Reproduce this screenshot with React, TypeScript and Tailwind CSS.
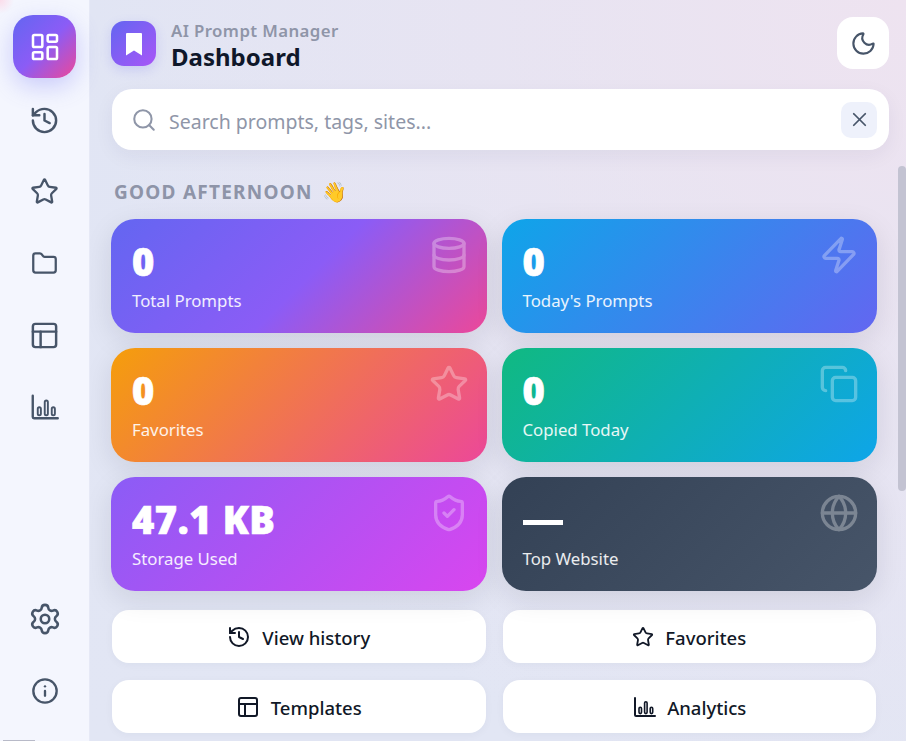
import { LayoutDashboard, History, Star, Folder, PanelsTopLeft, Settings, Info, Moon, X, Search, Database, Zap, Copy, ShieldCheck, Globe } from "lucide-react";
import type { ComponentType, ReactNode } from "react";

type IconT = ComponentType<{ className?: string; strokeWidth?: number }>;

function BarsIcon({ className, strokeWidth = 2 }: { className?: string; strokeWidth?: number }) {
  return (
    <svg viewBox="0 0 24 24" className={className} fill="none" stroke="currentColor" strokeLinecap="round" strokeLinejoin="round">
      <path d="M3 3v17a1 1 0 0 0 1 1h19" strokeWidth={strokeWidth} />
      <rect x="7" y="12.200" width="2.500" height="6.400" rx="1.250" strokeWidth={strokeWidth * 0.8} />
      <rect x="12.600" y="6.800" width="2.500" height="11.800" rx="1.250" strokeWidth={strokeWidth * 0.8} />
      <rect x="18.200" y="12.200" width="2.500" height="6.400" rx="1.250" strokeWidth={strokeWidth * 0.8} />
    </svg>
  );
}

function RailButton({ icon: Icon, active, iconClass, stroke = 1.9 }: { icon: IconT; active?: boolean; iconClass: string; stroke?: number }) {
  return (
    <button
      className={
        active
          ? "flex h-[63px] w-[63px] items-center justify-center rounded-[20px] bg-[linear-gradient(135deg,#6366f1_0%,#8b5cf6_50%,#ec4899_100%)] text-white shadow-[0_8px_24px_rgba(99,102,241,0.3)]"
          : "flex h-[63px] w-[63px] items-center justify-center rounded-[20px] text-[#475569]"
      }
    >
      <Icon className={iconClass} strokeWidth={stroke} />
    </button>
  );
}

function StatCard({ value, label, icon: Icon, gradient, dash }: { value?: string; label: string; icon: IconT; gradient: string; dash?: boolean }) {
  return (
    <div className={"relative h-[114px] rounded-[24px] px-[21px] pt-[21px] text-white shadow-[0_8px_28px_rgba(15,23,42,0.1)] " + gradient}>
      {dash ? (
        <div className="flex h-[44px] items-center">
          <div className="mt-[4px] h-[5px] w-[40px] bg-white" />
        </div>
      ) : (
        <div className="h-[44px] text-[38px] font-black leading-[42px] tracking-[0.6px] [-webkit-text-stroke:0.7px_white]">{value}</div>
      )}
      <div className="mt-[5px] text-[16.800px] leading-[24px] text-white/90">{label}</div>
      <Icon className="absolute right-[18px] top-[16px] h-[40px] w-[40px] opacity-30" strokeWidth={2} />
    </div>
  );
}

function ActionButton({ icon: Icon, iconClass = "h-[24px] w-[24px]", children }: { icon: IconT; iconClass?: string; children: ReactNode }) {
  return (
    <button className="flex h-[53px] items-center justify-center gap-[11px] rounded-[17px] bg-white text-[18.500px] font-medium text-[#111827] shadow-[0_2px_8px_rgba(30,41,89,0.04)]">
      <Icon className={iconClass} strokeWidth={2} />
      <span className="mt-[2px]">{children}</span>
    </button>
  );
}

export default function App() {
  return (
    <div className="relative flex h-[741px] w-[906px] overflow-hidden bg-[radial-gradient(circle_at_100%_0%,#eee3f0_0%,rgba(238,227,240,0)_70%),linear-gradient(#e1e5f4,#e2e6f4)] font-['Noto_Sans','Open_Sans',sans-serif]">
      <aside className="relative flex h-full w-[90px] shrink-0 flex-col items-start border-r border-[#e6e9f6] bg-[radial-gradient(circle_at_0_0,#fbdcea_0,rgba(251,220,234,0)_14px),linear-gradient(#f4f6fe,#f4f6fe)] pb-[19px] pl-[13px] pt-[15px]">
        <div className="flex flex-col gap-[9px]">
          <RailButton icon={LayoutDashboard} active iconClass="h-[32px] w-[32px]" />
          <RailButton icon={History} iconClass="mt-[3px] h-[31px] w-[31px]" />
          <RailButton icon={Star} iconClass="mt-[2px] h-[29px] w-[29px]" />
          <RailButton icon={Folder} iconClass="mt-[2px] h-[27px] w-[27px]" stroke={2} />
          <RailButton icon={PanelsTopLeft} iconClass="mt-[1px] h-[31px] w-[31px]" />
          <RailButton icon={BarsIcon} iconClass="-ml-[2px] mt-[1px] h-[30px] w-[30px]" />
        </div>
        <div className="mt-auto flex flex-col gap-[9px]">
          <RailButton icon={Settings} iconClass="h-[34px] w-[34px]" stroke={1.8} />
          <RailButton icon={Info} iconClass="h-[28px] w-[28px]" stroke={2} />
        </div>
        <div className="absolute bottom-0 left-[3px] h-[1px] w-[32px] bg-[#b8bac8]" />
      </aside>

      <main className="relative flex h-full min-w-0 flex-1 flex-col">
        <header className="flex h-[89px] shrink-0 items-start justify-between pl-[21px] pr-[17px] pt-[17px]">
          <div className="flex items-start gap-[15px]">
            <div className="mt-[4px] flex h-[45px] w-[45px] items-center justify-center rounded-[13px] bg-[linear-gradient(135deg,#6366f1,#a855f7)] shadow-[0_4px_12px_rgba(99,102,241,0.2)]">
              <svg viewBox="0 0 24 24" className="h-[24px] w-[24px]" fill="white">
                <path d="M5 1h14a1 1 0 0 1 1 1v21.500l-8-5-8 5V2a1 1 0 0 1 1-1z" />
              </svg>
            </div>
            <div className="mt-[4px] flex flex-col">
              <span className="text-[16.800px] font-semibold leading-[20px] tracking-[0.4px] text-[#8f95a8]">AI Prompt Manager</span>
              <span className="text-[24px] font-bold leading-[32px] text-[#0f172a]">Dashboard</span>
            </div>
          </div>
          <button className="flex h-[52px] w-[52px] items-center justify-center rounded-[16px] bg-white text-[#475569]">
            <Moon className="h-[27px] w-[27px]" strokeWidth={1.9} />
          </button>
        </header>

        <div className="shrink-0 pl-[22px] pr-[17px]">
          <div className="flex h-[61px] items-center rounded-[20px] bg-white pl-[19px] pr-[12px] shadow-[0_6px_20px_rgba(30,41,89,0.06)]">
            <Search className="h-[26px] w-[26px] text-[#8f96a8]" strokeWidth={1.9} />
            <span className="ml-[12px] mt-[5px] flex-1 text-[19.500px] text-[#8f96a8]">Search prompts, tags, sites...</span>
            <button className="flex h-[36px] w-[36px] items-center justify-center rounded-[10px] bg-[#eef1fb] text-[#475569]">
              <X className="h-[23px] w-[23px]" strokeWidth={1.800} />
            </button>
          </div>
        </div>

        <div className="mt-[16px] min-h-0 flex-1 overflow-hidden pl-[21px] pr-[29px]">
          <div className="flex h-[53px] items-start pl-[3px] pt-[11px] text-[19px] font-bold leading-[30px] tracking-[1.250px] text-[#8e94a8]">
            <span>GOOD AFTERNOON</span>
            <span className="ml-[9px] text-[20px] tracking-normal">👋</span>
          </div>
          <div className="grid grid-cols-2 gap-[15px]">
            <StatCard value="0" label="Total Prompts" icon={Database} gradient="bg-[linear-gradient(135deg,#6366f1_0%,#8b5cf6_52%,#ec4899_100%)]" />
            <StatCard value="0" label="Today's Prompts" icon={Zap} gradient="bg-[linear-gradient(135deg,#0ea5e9,#6366f1)]" />
            <StatCard value="0" label="Favorites" icon={Star} gradient="bg-[linear-gradient(135deg,#f59e0b,#ec4899)]" />
            <StatCard value="0" label="Copied Today" icon={Copy} gradient="bg-[linear-gradient(135deg,#10b981,#0ea5e9)]" />
            <StatCard value="47.1 KB" label="Storage Used" icon={ShieldCheck} gradient="bg-[linear-gradient(135deg,#8b5cf6,#d946ef)]" />
            <StatCard dash label="Top Website" icon={Globe} gradient="bg-[linear-gradient(135deg,#334155,#475569)]" />
          </div>
          <div className="mt-[19px] grid grid-cols-2 gap-x-[17px] gap-y-[17px] px-[1px]">
            <ActionButton icon={History}>View history</ActionButton>
            <ActionButton icon={Star} iconClass="h-[22px] w-[22px]">Favorites</ActionButton>
            <ActionButton icon={PanelsTopLeft}>Templates</ActionButton>
            <ActionButton icon={BarsIcon}>Analytics</ActionButton>
          </div>
        </div>
        <div className="absolute right-0 top-[166px] h-[325px] w-[8px] rounded-[4px] bg-[#c3c3d2]" />
      </main>
    </div>
  );
}
